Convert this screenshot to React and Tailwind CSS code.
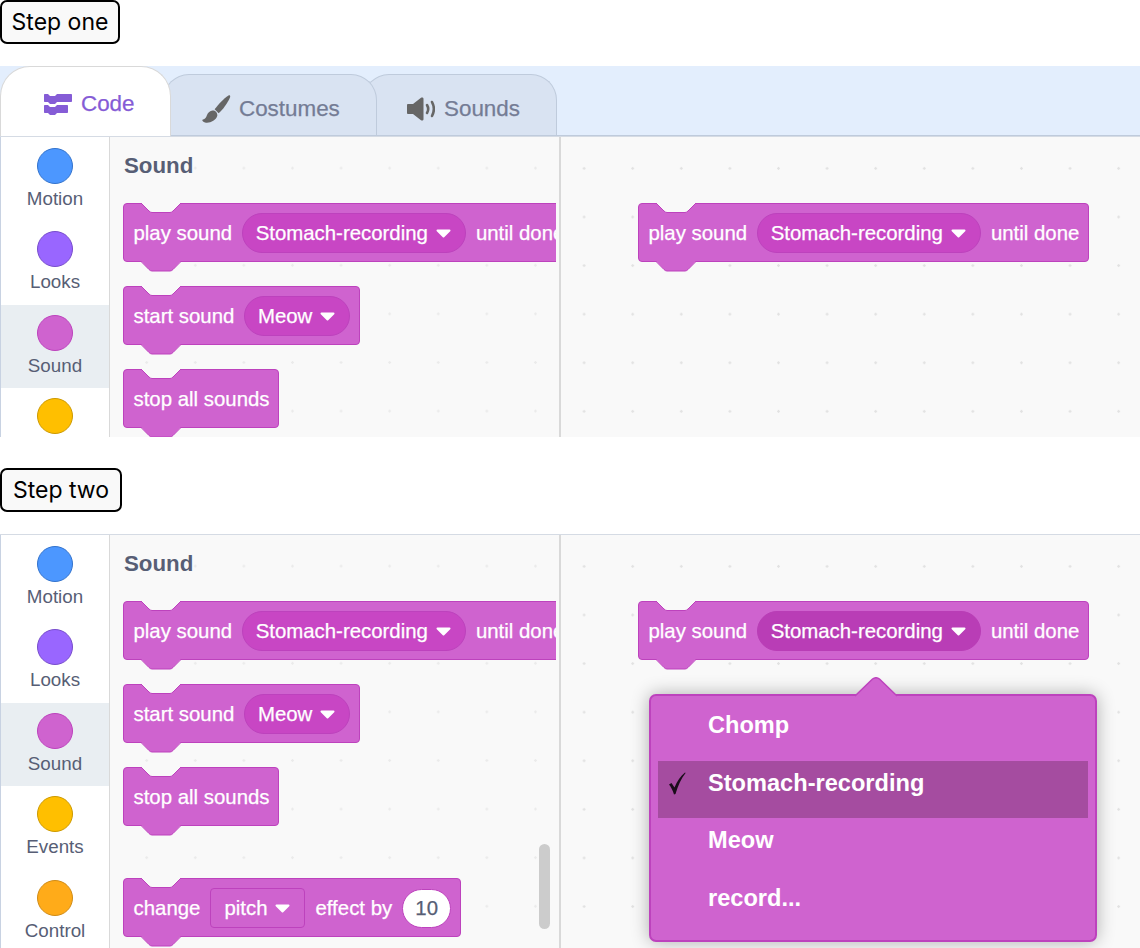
const categories = [
  { name: 'Motion', fill: 'bg-[#4c97ff] border-[#3373cc]' },
  { name: 'Looks', fill: 'bg-[#9966ff] border-[#774dcb]' },
  { name: 'Sound', fill: 'bg-[#cf63cf] border-[#bd42bd]', active: true },
  { name: 'Events', fill: 'bg-[#ffbf00] border-[#cc9900]' },
  { name: 'Control', fill: 'bg-[#ffab19] border-[#cf8b17]' },
]

function Caret() {
  return (
    <svg width="15" height="9" viewBox="0 0 15 9" className="shrink-0">
      <path d="M1.5 1.5H13.5L7.5 7.5Z" fill="#fff" stroke="#fff" strokeWidth="2" strokeLinejoin="round" />
    </svg>
  )
}

function Block({ children, className = '' }) {
  return (
    <div className={`relative flex items-center w-fit h-[59px] pl-[9.5px] pr-[8.5px] pt-px gap-[10px] bg-[#cf63cf] border border-[#bd42bd] rounded-[4px] whitespace-nowrap text-white text-[20.4px] [-webkit-text-stroke-width:0.25px] ${className}`}>
      <svg width="43" height="11" viewBox="0 0 43 11" className="absolute -top-px left-[16px]">
        <path d="M1 0 L9 8 Q10.5 9.5 12 9.5 H30 Q31.5 9.5 33 8 L41 0Z" fill="#f9f9f9" />
        <path d="M1 0 L9 8 Q10.5 9.5 12 9.5 H30 Q31.5 9.5 33 8 L41 0" fill="none" stroke="#bd42bd" />
      </svg>
      <svg width="43" height="12" viewBox="0 0 43 12" className="absolute top-full left-[16px]">
        <path d="M1 0 L9 8.5 Q10.5 10 12 10 H30 Q31.5 10 33 8.5 L41 0Z" fill="#cf63cf" />
        <path d="M1 0.5 L9 8.5 Q10.5 10 12 10 H30 Q31.5 10 33 8.5 L41 0.5" fill="none" stroke="#bd42bd" />
      </svg>
      {children}
    </div>
  )
}

function Pill({ label, open }) {
  return (
    <div className={`flex items-center h-[40px] pl-[12.5px] pr-[14px] gap-[8px] rounded-full border ${open ? 'bg-[#b93db6] border-[#b93db6]' : 'bg-[#c846c4] border-[#bd42bd]'}`}>
      <span>{label}</span>
      <Caret />
    </div>
  )
}

function PlaySound({ open }) {
  return (
    <Block>
      <span>play sound</span>
      <Pill label="Stomach-recording" open={open} />
      <span>until done</span>
    </Block>
  )
}

function CodeIcon() {
  return (
    <svg width="28" height="21" viewBox="0 0 28 21" fill="#855cd6">
      <path d="M1 0 H4 L6 2 H11 L13 0 H27 C27.6 0 28 .4 28 1 V7 C28 7.6 27.6 8 27 8 H13 L11 10 H6 L4 8 H1 C.4 8 0 7.6 0 7 V1 C0 .4 .4 0 1 0Z" />
      <path d="M1 11 H4 L6 13 H11 L13 11 H23 C23.6 11 24 11.4 24 12 V18 C24 18.6 23.6 19 23 19 H13 L11 21 H6 L4 19 H1 C.4 19 0 18.6 0 18 V12 C0 11.4 .4 11 1 11Z" />
    </svg>
  )
}

function BrushIcon() {
  return (
    <svg width="29" height="28" viewBox="0 0 29 28" fill="#666">
      <path d="M26.5 .5 C27.8 -.2 28.6 1 28 2.4 C25.5 8 21 14.5 16.6 18.2 L12.6 14.2 C16.5 9.5 21.5 3.5 26.5 .5Z" />
      <path d="M10.5 15.5 C13 15 16 18 15.2 21 C13.8 25.5 8 28.5 3 27.5 C1 27 -.2 25.5 .5 24.8 C3.5 24 4 22.5 5 20 C6 17.5 8 16 10.5 15.5Z" />
    </svg>
  )
}

function SpeakerIcon() {
  return (
    <svg width="28" height="24" viewBox="0 0 28 24">
      <path d="M1 7 H6 L14 .7 C15 0 16.5 .5 16.5 1.8 V22.2 C16.5 23.5 15 24 14 23.3 L6 17 H1 C.5 17 0 16.5 0 16 V8 C0 7.5 .5 7 1 7Z" fill="#666" />
      <path d="M20 8 C21.5 10.5 21.5 13.5 20 16" fill="none" stroke="#666" strokeWidth="2.6" strokeLinecap="round" />
      <path d="M25 5 C27.4 9.5 27.4 14.5 25 19" fill="none" stroke="#666" strokeWidth="2.6" strokeLinecap="round" />
    </svg>
  )
}

function StepLabel({ children, className = '' }) {
  return (
    <div className={`flex items-center justify-center h-[44px] bg-[#f9f9f9] border-2 border-black rounded-[7px] font-['Inter',sans-serif] text-[23px] text-black ${className}`}>
      {children}
    </div>
  )
}

function Tabs() {
  return (
    <div className="flex items-end h-[70px] bg-[#e3eefd] border-b border-[#bfcbdc] text-[22.4px] [-webkit-text-stroke-width:0.25px]">
      <div className="relative z-30 flex items-center gap-[9px] w-[171px] h-[70px] -mb-px pt-[5px] pl-[43px] bg-white border-[1.5px] border-b-0 border-[#d9d9d9] rounded-t-[30px] text-[#855cd6]">
        <CodeIcon />
        <span>Code</span>
      </div>
      <div className="relative z-20 flex items-center gap-[8px] w-[214px] h-[61px] -ml-[8px] pt-[7px] pl-[38px] bg-[#d9e3f2] border-[1.5px] border-b-0 border-[#bfcbdc] rounded-t-[26px] text-[#747c95]">
        <BrushIcon />
        <span>Costumes</span>
      </div>
      <div className="relative z-10 flex items-center gap-[9px] w-[194px] h-[61px] -ml-[14px] pt-[7px] pl-[43px] bg-[#d9e3f2] border-[1.5px] border-b-0 border-[#bfcbdc] rounded-t-[26px] text-[#747c95]">
        <SpeakerIcon />
        <span>Sounds</span>
      </div>
    </div>
  )
}

function Editor({ height, stepTwo }) {
  return (
    <div className={`flex overflow-hidden bg-white border-t border-[#d5dbe4] ${height}`}>
      <div className="w-[110px] shrink-0 pt-px border-l border-r border-l-[#c8d2e2] border-r-[#d9d9d9] text-[#575e75] text-[18.8px]">
        {categories.slice(0, stepTwo ? 5 : 4).map((c) => (
          <div key={c.name} className={`flex flex-col items-center h-[83.4px] pt-[10px] ${c.active ? 'bg-[#e9eef2]' : ''}`}>
            <div className={`w-[36px] h-[36px] shrink-0 rounded-full border ${c.fill}`} />
            <span className="mt-[4px] leading-[22px]">{c.name}</span>
          </div>
        ))}
      </div>

      <div className="relative w-[451px] shrink-0 border-r-2 border-[#d9d9d9] bg-[#f9f9f9] bg-[radial-gradient(circle,#ebebeb_1px,transparent_1.5px)] bg-[length:48.6px_48.6px] bg-[position:12.4px_6.8px]">
        <div className="w-[446px] h-full overflow-hidden pl-[13px]">
          <h3 className="h-[28px] ml-px mt-[15px] mb-[23px] leading-[28px] text-[22.3px] font-bold text-[#575e75]">Sound</h3>
          <div className="flex flex-col gap-[24px]">
            <PlaySound />
            <Block>
              <span>start sound</span>
              <Pill label="Meow" />
            </Block>
            <Block>
              <span>stop all sounds</span>
            </Block>
            {stepTwo && (
              <Block className="mt-[28px]">
                <span>change</span>
                <div className="flex items-center h-[40px] pl-[13px] pr-[14px] gap-[8px] rounded-[4px] border border-[#bd42bd]">
                  <span>pitch</span>
                  <Caret />
                </div>
                <span>effect by</span>
                <div className="flex items-center justify-center w-[49px] h-[39px] rounded-full bg-white border border-[#bd42bd] text-[#575e75]">10</div>
              </Block>
            )}
          </div>
        </div>
        {stepTwo && <div className="absolute left-[429px] top-[309px] w-[11px] h-[85px] rounded-full bg-[#cccccc]" />}
      </div>

      <div className="relative flex-1 pl-[77px] pt-[66px] bg-[#f9f9f9] bg-[radial-gradient(circle,#e2e2e2_1px,transparent_1.5px)] bg-[length:48.6px_48.6px] bg-[position:-1.2px_7.1px]">
        <PlaySound open={stepTwo} />
        {stepTwo && <SoundMenu />}
      </div>
    </div>
  )
}

const menuItems = ['Chomp', 'Stomach-recording', 'Meow', 'record...']

function SoundMenu() {
  return (
    <div className="absolute left-[88px] top-[159px] w-[448px] h-[248px] px-[7px] py-[7px] bg-[#cf63cf] border-2 border-[#bd42bd] rounded-[7px] shadow-[0_0_18px_rgba(0,0,0,0.3)] text-white text-[23.6px] font-bold">
      <svg width="44" height="20" viewBox="0 0 44 20" className="absolute -top-[19.5px] left-[203px]">
        <path d="M1 19 L18.5 2 Q22 -.5 25.5 2 L43 19 V20 H1Z" fill="#cf63cf" />
        <path d="M1 19 L18.5 2 Q22 -.5 25.5 2 L43 19" fill="none" stroke="#bd42bd" strokeWidth="1.5" />
      </svg>
      {menuItems.map((item) => {
        const selected = item === 'Stomach-recording'
        return (
          <div key={item} className={`relative flex items-center h-[57.5px] pl-[50px] pb-[12px] ${selected ? 'bg-[#a54ca0]' : ''}`}>
            {selected && (
              <svg width="18" height="23" viewBox="0 0 18 23" className="absolute left-[10px] top-[11px]">
                <path d="M1 12.5 L3.5 11 L6.5 15.5 C9 9.5 12.5 4 17 .5 L17.6 1 C13 6.5 10 13.5 7.5 22 L6 22.5 C4.8 18.5 3 15 1 12.5Z" fill="#1a0d1a" />
              </svg>
            )}
            <span>{item}</span>
          </div>
        )
      })}
    </div>
  )
}

export default function App() {
  return (
    <div className="w-[1140px] h-[948px] overflow-hidden bg-white font-['Liberation_Sans',Arial,sans-serif]">
      <StepLabel className="w-[120px]">Step one</StepLabel>
      <div className="mt-[22px]">
        <Tabs />
        <Editor height="h-[301px]" />
      </div>
      <StepLabel className="w-[122px] mt-[31px]">Step two</StepLabel>
      <div className="mt-[22px]">
        <Editor height="h-[414px]" stepTwo />
      </div>
    </div>
  )
}
